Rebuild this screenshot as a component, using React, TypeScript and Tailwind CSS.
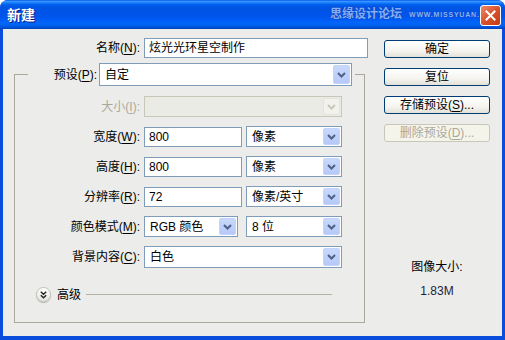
import React from "react";

function Chevron({ disabled }: { disabled?: boolean }) {
  return (
    <svg width="9" height="6" viewBox="0 0 9 6">
      <path d="M1 1 L4.5 4.5 L8 1" fill="none" stroke={disabled ? "#c9c7ba" : "#4d6185"} strokeWidth="2" />
    </svg>
  );
}

function Lbl({ t, k, disabled }: { t: string; k: string; disabled?: boolean }) {
  return (
    <span className={disabled ? "text-[#aca899]" : "text-black"}>
      {t}(<span className="underline underline-offset-[2px]">{k}</span>):
    </span>
  );
}

function Input({ value, w }: { value: string; w: string }) {
  return (
    <div className={`flex h-[20px] items-center border border-[#7f9db9] bg-white pl-[4px] ${w}`}>{value}</div>
  );
}

function Select({ value, w, h, disabled }: { value: string; w: string; h: string; disabled?: boolean }) {
  return (
    <div
      className={`flex ${h} ${w} border p-[1px] ${
        disabled ? "border-[#c9c7ba] bg-[#ebebe6]" : "border-[#7f9db9] bg-white"
      }`}
    >
      <div className="flex flex-1 items-center pl-[4px]">{value}</div>
      <div
        className={`flex w-[17px] items-center justify-center rounded-[2px] border ${
          disabled
            ? "border-[#e4e3dc] bg-[#f2f1ec]"
            : "border-[#c3d3fb] bg-[linear-gradient(#c8d8fd,#b6c9f7)]"
        }`}
      >
        <Chevron disabled={disabled} />
      </div>
    </div>
  );
}

function Btn({ children, disabled }: { children: React.ReactNode; disabled?: boolean }) {
  return (
    <div
      className={`flex h-[18px] w-[106px] items-center justify-center rounded-[3px] border ${
        disabled
          ? "border-[#c9c7ba] bg-[#f5f4ea] text-[#aca899]"
          : "border-[#003c74] bg-[linear-gradient(#ffffff,#f5f4ef_60%,#e3e1d8)] text-black"
      }`}
    >
      {children}
    </div>
  );
}

function Row({ label, children }: { label: React.ReactNode; children: React.ReactNode }) {
  return (
    <div className="flex h-[21px] items-center">
      <div className="w-[125px] text-right">{label}</div>
      <div className="ml-[4px] flex items-center">{children}</div>
    </div>
  );
}

export default function App() {
  return (
    <div className='flex h-[340px] w-[505px] flex-col overflow-hidden rounded-t-[8px] bg-[#0a4ddc] font-[family-name:"Liberation_Sans","Noto_Sans_CJK_SC",sans-serif] text-[12px] leading-[14px] text-black'>
      {/* Title bar */}
      <div className="relative flex h-[29px] shrink-0 items-center bg-[linear-gradient(#0058ee_0%,#3a93ff_5%,#1a83ff_9%,#0262ee_15%,#0057e5_22%,#0054e3_30%,#0055eb_56%,#005bf5_68%,#0366fa_78%,#0060ee_88%,#0050d4_95%,#0042b8_100%)] pl-[7px]">
        <span className="text-[14px] font-bold text-white [text-shadow:1px_1px_0_#0a1a7a]">新建</span>
        <span className="absolute left-[330px] top-[7px] text-[12px] font-bold leading-[14px] text-[#86aef4] [text-shadow:0_0_1px_#0a2a9a]">
          思缘设计论坛
        </span>
        <span className="absolute left-[409px] top-[11px] text-[7px] font-bold leading-[8px] tracking-[0.8px] text-[#8fb6f5] [text-shadow:0_0_1px_#0a2a9a]">
          WWW.MISSYUAN.COM
        </span>
        <div className="absolute right-[4px] top-[5px] flex h-[21px] w-[21px] items-center justify-center rounded-[3px] border border-white bg-[linear-gradient(135deg,#ec8a6c,#d9522c_50%,#c23a16)]">
          <svg width="11" height="11" viewBox="0 0 11 11">
            <path d="M1.5 1.5 L9.5 9.5 M9.5 1.5 L1.5 9.5" stroke="white" strokeWidth="2" strokeLinecap="square" />
          </svg>
        </div>
      </div>

      {/* Body */}
      <div className="mx-[3px] mb-[4px] flex flex-1 bg-[#ececea]">
        {/* Left column */}
        <div className="w-[366px]">
          <div className="mt-[9px] flex h-[20px] items-center">
            <div className="w-[137px] text-right">
              <Lbl t="名称" k="N" />
            </div>
            <div className="ml-[4px]">
              <Input value="炫光光环星空制作" w="w-[224px]" />
            </div>
          </div>

          <fieldset className="m-0 ml-[11px] mt-[5px] w-[351px] border border-[#aca899] p-0 pb-[20px]">
            <legend className="ml-[13px] flex w-[327px] items-center p-0">
              <div className="w-[69px] text-right">
                <Lbl t="预设" k="P" />
              </div>
              <div className="ml-[2px]">
                <Select value="自定" w="w-[253px]" h="h-[23px]" />
              </div>
              <div className="w-[3px]" />
            </legend>

            <div className="mt-[10px] flex flex-col gap-[9px]">
              <Row label={<Lbl t="大小" k="I" disabled />}>
                <Select value="" w="w-[198px]" h="h-[21px]" disabled />
              </Row>
              <Row label={<Lbl t="宽度" k="W" />}>
                <Input value="800" w="w-[98px]" />
                <div className="ml-[4px]">
                  <Select value="像素" w="w-[96px]" h="h-[21px]" />
                </div>
              </Row>
              <Row label={<Lbl t="高度" k="H" />}>
                <Input value="800" w="w-[98px]" />
                <div className="ml-[4px]">
                  <Select value="像素" w="w-[96px]" h="h-[21px]" />
                </div>
              </Row>
              <Row label={<Lbl t="分辨率" k="R" />}>
                <Input value="72" w="w-[98px]" />
                <div className="ml-[4px]">
                  <Select value="像素/英寸" w="w-[96px]" h="h-[21px]" />
                </div>
              </Row>
              <Row label={<Lbl t="颜色模式" k="M" />}>
                <Select value="RGB 颜色" w="w-[94px]" h="h-[21px]" />
                <div className="ml-[8px]">
                  <Select value="8 位" w="w-[96px]" h="h-[21px]" />
                </div>
              </Row>
              <Row label={<Lbl t="背景内容" k="C" />}>
                <Select value="白色" w="w-[198px]" h="h-[22px]" />
              </Row>
            </div>

            <div className="ml-[21px] mt-[20px] flex h-[15px] items-center">
              <div className="flex h-[15px] w-[15px] items-center justify-center rounded-full border border-[#c4c2b6] bg-[linear-gradient(#ffffff,#e6e5df)] shadow-[0_1px_1px_rgba(0,0,0,0.25)]">
                <svg width="7" height="8" viewBox="0 0 7 8">
                  <path d="M0.8 0.8 L3.5 3.3 L6.2 0.8 M0.8 4.3 L3.5 6.8 L6.2 4.3" fill="none" stroke="#222" strokeWidth="1.4" />
                </svg>
              </div>
              <span className="ml-[6px]">高级</span>
              <div className="ml-[5px] mr-[32px] h-px flex-1 bg-[#b5b3a6]" />
            </div>
          </fieldset>
        </div>

        {/* Right column */}
        <div className="ml-[15px] flex w-[106px] flex-col pt-[11px]">
          <div className="flex flex-col gap-[10px]">
            <Btn>确定</Btn>
            <Btn>复位</Btn>
            <Btn>
              存储预设(<span className="underline underline-offset-[2px]">S</span>)...
            </Btn>
            <Btn disabled>
              删除预设(<span className="underline underline-offset-[2px]">D</span>)...
            </Btn>
          </div>
          <div className="mt-[118px] text-center">图像大小:</div>
          <div className="mt-[10px] text-center text-[#1e1e3c]">1.83M</div>
        </div>
      </div>
    </div>
  );
}
